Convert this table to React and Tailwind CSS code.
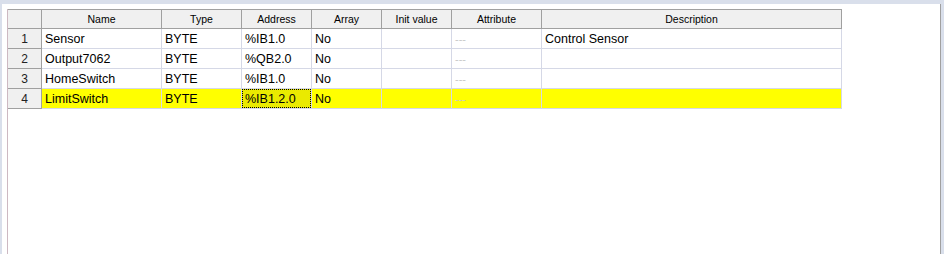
import React from 'react';

const columns = [
  { key: 'name', label: 'Name', width: 120 },
  { key: 'type', label: 'Type', width: 80 },
  { key: 'address', label: 'Address', width: 70 },
  { key: 'array', label: 'Array', width: 70 },
  { key: 'init', label: 'Init value', width: 70 },
  { key: 'attr', label: 'Attribute', width: 90 },
  { key: 'desc', label: 'Description', width: 300 },
];

const variables = [
  { name: 'Sensor', type: 'BYTE', address: '%IB1.0', array: 'No', init: '', attr: '---', desc: 'Control Sensor' },
  { name: 'Output7062', type: 'BYTE', address: '%QB2.0', array: 'No', init: '', attr: '---', desc: '' },
  { name: 'HomeSwitch', type: 'BYTE', address: '%IB1.0', array: 'No', init: '', attr: '---', desc: '' },
  { name: 'LimitSwitch', type: 'BYTE', address: '%IB1.2.0', array: 'No', init: '', attr: '---', desc: '', selected: true },
];

const App = () => {
  return (
    <div
      className="w-[944px] h-[254px] bg-[#d9dfeb] pt-[4px] pl-[2px] pr-[3px] flex overflow-hidden"
      style={{ fontFamily: '"Liberation Sans", Arial, sans-serif' }}
    >
      <div className="flex-1 bg-white border-r border-[#a0a0a0] pt-[5px] pl-[5px] flex">
        {/* grid area, its left edge runs down the whole panel */}
        <div className="h-full border-l border-[#cdb9c2]">
          <div className="grid grid-cols-[34px_120px_80px_70px_70px_70px_90px_300px]">
            {/* header row */}
            <div className="h-[20px] bg-[#f0f0f0] border-t border-b border-r border-[#a0a0a0]" />
            {columns.map((col) => (
              <div
                key={col.key}
                className="h-[20px] bg-[#f0f0f0] border-t border-b border-r border-[#a0a0a0] flex items-center justify-center pt-[1px] text-[10.5px] text-black"
              >
                {col.label}
              </div>
            ))}

            {variables.map((row, i) => (
              <React.Fragment key={row.name}>
                <div className="h-[20px] bg-[#f0f0f0] border-r border-b border-[#a0a0a0] flex items-center justify-center pt-[1px] text-[12px] text-[#222]">
                  {i + 1}
                </div>
                {columns.map((col) => {
                  const focused = row.selected && col.key === 'address';
                  const isAttr = col.key === 'attr';
                  return (
                    <div
                      key={col.key}
                      className={`h-[20px] border-r border-b border-[#d5d8e6] flex items-center pt-[1px] whitespace-nowrap overflow-hidden ${
                        row.selected ? 'bg-[#ffff00]' : 'bg-white'
                      }`}
                    >
                      {focused ? (
                        <div className="w-full h-[19px] -mt-px bg-[#eaea00] border border-dotted border-black flex items-center pt-[1px] pl-[2px] text-[12.5px] text-black">
                          {row[col.key]}
                        </div>
                      ) : (
                        <span
                          className={
                            isAttr
                              ? 'pl-[3px] text-[11px] text-[#c8c8c8]'
                              : 'pl-[3px] text-[12.5px] text-black'
                          }
                        >
                          {row[col.key]}
                        </span>
                      )}
                    </div>
                  );
                })}
              </React.Fragment>
            ))}
          </div>
        </div>
      </div>
    </div>
  );
};

export default App;
